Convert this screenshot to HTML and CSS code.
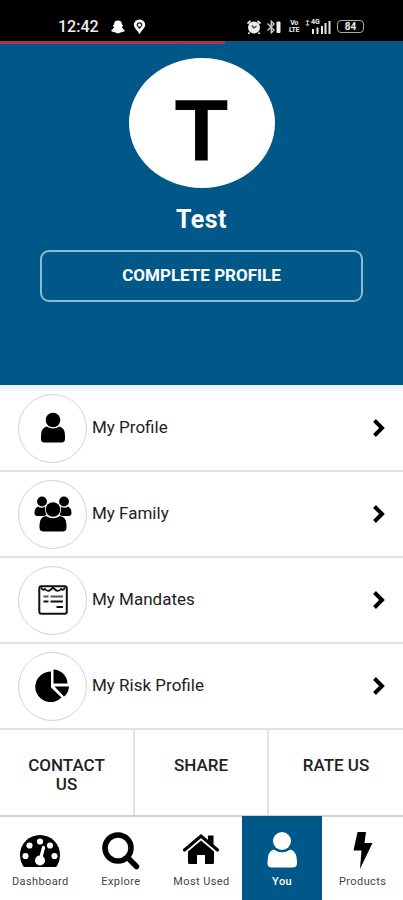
FILE: index.html
```
<!doctype html>
<html lang="en">
<head>
	<meta charset="utf-8">
	<meta name="viewport" content="width=device-width, initial-scale=1.0" />
	<title>You</title>
	<link rel="stylesheet" href="styles.css">
</head>
<body>
	<div class="statusbar">
		<span class="clock">12:42</span>
		<svg class="ghost" width="14" height="14" viewBox="0 0 14 14"><path d="M7 0.500C4.400 0.500 3 2 3.100 4.600L1.800 5.200L3 7C2.500 8.500 1.600 9.500 0.300 10L0.700 11.500L2.500 12L4.500 12.500L7 13.500L9.500 12.500L11.500 12L13.300 11.500L13.700 10C12.400 9.500 11.500 8.500 11 7L12.200 5.200L10.900 4.600C11 2 9.600 0.500 7 0.500Z" fill="#fff"/></svg>
		<svg class="pin" width="13" height="15" viewBox="0 0 13 15"><path d="M6.500 1.800A4.300 4.300 0 0 0 2.200 6C2.200 8.500 5 10 6.500 12.500C8 10 10.800 8.500 10.800 6A4.300 4.300 0 0 0 6.500 1.800Z" fill="#222" stroke="#fff" stroke-width="2.800"/><circle cx="6.500" cy="6" r="1.500" fill="#fff"/></svg>
		<div class="system">
			<svg width="14" height="14" viewBox="0 0 14 14"><circle cx="7" cy="7.600" r="6" fill="#eee"/><path d="M0.500 3.500L3.500 1M10.500 1L13.500 3.500M2.500 12.500L1.300 14M11.500 12.500L12.700 14" stroke="#eee" stroke-width="1.700"/><path d="M4.800 5.500L7 8L9.500 6" stroke="#333" stroke-width="1.200" fill="none"/></svg>
			<svg class="bluetooth" width="16" height="14" viewBox="0 0 16 14"><path d="M1.500 3.500L8 10L5.300 12.800V1.200L8 4L1.500 10.500" stroke="#ccc" stroke-width="1.400" fill="none"/><rect x="10.500" y="1.500" width="4" height="11.500" rx="1" fill="#eee"/></svg>
			<span class="volte">Vo<br>LTE</span>
			<div class="signal">
				<span class="network">4G</span>
				<svg width="26" height="14" viewBox="0 0 26 14"><path d="M2.500 0V6M0.700 2L2.500 0L4.300 2M0.700 4L2.500 6L4.300 4" stroke="#bbb" fill="none"/><path d="M8 9V14M12.500 7.500V14M17 6V14M20.500 3V14M24.500 1V14" stroke="#e5e5e5" stroke-width="2"/></svg>
			</div>
			<span class="battery">84</span>
		</div>
	</div>
	<div class="progress"></div>

	<div class="header">
		<div class="avatar">T</div>
		<h1>Test</h1>
		<a class="complete" href="#">COMPLETE PROFILE</a>
	</div>

	<ul class="menu">
		<li>
			<span class="round"><svg width="40" height="40" viewBox="0 0 40 40"><circle cx="20" cy="12" r="7.300"/><path d="M13.500 18.500Q20 22.500 26.500 18.500Q32 20 32 27.500V31Q32 34.500 28.500 34.500H11.500Q8 34.500 8 31V27.500Q8 20 13.500 18.500Z"/></svg></span>
			<span class="label">My Profile</span>
			<svg class="arrow" width="14" height="20" viewBox="0 0 14 20"><path d="M2.500 2.500L10 10L2.500 17.500"/></svg>
		</li>
		<li>
			<span class="round"><svg width="40" height="40" viewBox="0 0 40 40"><circle cx="9" cy="7.500" r="4.900"/><circle cx="31" cy="7.500" r="4.900"/><path d="M5 12.500Q9 15 12 12.500Q11.500 17.500 13.500 20.500Q12 22 10 22H4.500Q1.500 22 1.500 18.500Q1.500 14 5 12.500Z"/><path d="M35 12.500Q31 15 28 12.500Q28.500 17.500 26.500 20.500Q28 22 30 22H35.500Q38.500 22 38.500 18.500Q38.500 14 35 12.500Z"/><circle cx="20" cy="15.500" r="7.300"/><path d="M13 22Q20 26.500 27 22Q33.500 23 33.500 31V33.500Q33.500 37.500 29.500 37.500H10.500Q6.500 37.500 6.500 33.500V31Q6.500 23 13 22Z"/></svg></span>
			<span class="label">My Family</span>
			<svg class="arrow" width="14" height="20" viewBox="0 0 14 20"><path d="M2.500 2.500L10 10L2.500 17.500"/></svg>
		</li>
		<li>
			<span class="round"><svg width="40" height="40" viewBox="0 0 40 40"><rect x="6.300" y="6.300" width="27.500" height="27.500" rx="2" fill="none" stroke="#111" stroke-width="2"/><path d="M8 7.500Q10 11 12 9Q15 12.500 18 9.500L20 7.500L22 9.500Q25 12.500 28 9Q30 11 32 7.500" fill="none" stroke="#111" stroke-width="1.800"/><path d="M10.500 16.500H15.500M17.500 16.500H30" stroke="#555" stroke-width="2"/><path d="M10.500 21.500H15.500M17.500 21.500H30M23.500 27H30" stroke="#111" stroke-width="2"/></svg></span>
			<span class="label">My Mandates</span>
			<svg class="arrow" width="14" height="20" viewBox="0 0 14 20"><path d="M2.500 2.500L10 10L2.500 17.500"/></svg>
		</li>
		<li>
			<span class="round"><svg width="40" height="40" viewBox="0 0 40 40"><path d="M18 5.500V21.500L28.500 31.500A15.300 15.300 0 1 1 18 5.500Z"/><path d="M20.500 3.500A14.500 14.500 0 0 1 34.500 17.500H20.500Z"/><path d="M21.500 20.500H36Q35.500 27 31 30.500Z"/></svg></span>
			<span class="label">My Risk Profile</span>
			<svg class="arrow" width="14" height="20" viewBox="0 0 14 20"><path d="M2.500 2.500L10 10L2.500 17.500"/></svg>
		</li>
	</ul>

	<div class="actions">
		<a href="#">CONTACT US</a>
		<a href="#">SHARE</a>
		<a href="#">RATE US</a>
	</div>

	<div class="tabs">
		<a href="#">
			<svg width="42" height="42" viewBox="0 0 42 42"><path d="M4 36Q1 31 1 25A20 20 0 0 1 41 25Q41 31 38 36Q37 37 36 37H6Q5 37 4 36Z"/><g fill="#fff"><circle cx="6.500" cy="26" r="3.100"/><circle cx="10.500" cy="15.500" r="3.100"/><circle cx="21" cy="11.500" r="3.100"/><circle cx="31" cy="15.500" r="3.100"/><circle cx="35.500" cy="26" r="3.100"/><circle cx="21" cy="30.500" r="5"/></g><path d="M21.500 29L24.500 17.500" stroke="#fff" stroke-width="3.200" stroke-linecap="round"/></svg>
			<span>Dashboard</span>
		</a>
		<a href="#">
			<svg width="42" height="42" viewBox="0 0 42 42"><circle cx="18" cy="18" r="13" fill="none" stroke="#000" stroke-width="5.500"/><path d="M28 28L36.500 36.500" stroke="#000" stroke-width="5.500" stroke-linecap="round"/></svg>
			<span>Explore</span>
		</a>
		<a href="#">
			<svg width="42" height="42" viewBox="0 0 42 42"><path d="M28 5.500H33.500V18L28 13Z"/><path d="M4.500 20L21 6L37.500 20" fill="none" stroke="#000" stroke-width="3.200" stroke-linecap="round"/><path d="M21 10.500L34 21.500V32.500Q34 34 32.500 34H25V25H17V34H9.500Q8 34 8 32.500V21.500Z"/></svg>
			<span>Most Used</span>
		</a>
		<a class="active" href="#">
			<svg width="42" height="42" viewBox="0 0 42 42"><circle cx="21" cy="11" r="9"/><path d="M12.500 19.500Q21 25 29.500 19.500Q36 21.500 36 32V33.500Q36 37.500 31.500 37.500H11Q6.500 37.500 6.500 33.500V32Q6.500 21.500 12.500 19.500Z"/></svg>
			<span>You</span>
		</a>
		<a href="#">
			<svg width="42" height="42" viewBox="0 0 42 42"><path d="M15.500 2H24L22.500 13H30.500L18 39L19.500 20.500H11.500Z"/></svg>
			<span>Products</span>
		</a>
	</div>
</body>
</html>
```
FILE: styles.css
```
* {margin:0; padding:0; box-sizing:border-box;}
body {width:403px; height:900px; background:#fff; color:#222; font-family:Roboto,"Liberation Sans",sans-serif; overflow:hidden;}
a {color:inherit; text-decoration:none;}
svg {display:block; flex:none;}

.statusbar {display:flex; align-items:center; height:41px; padding:12px 39px 0 58px; background:#000; color:#eee;}
.clock {width:40px; font-size:16px; font-weight:500; line-height:16px; white-space:nowrap;}
.ghost {margin-left:13px;}
.pin {margin-left:8px;}
.system {display:flex; align-items:center; margin-left:auto;}
.bluetooth {margin-left:5px;}
.volte {width:12px; margin-left:6px; font-size:7px; font-weight:700; line-height:7px; text-align:center; letter-spacing:-0.5px;}
.signal {position:relative; margin-left:5px;}
.network {position:absolute; left:6px; top:-2px; font-size:7px; font-weight:700; line-height:8px;}
.battery {width:27px; height:13px; margin-left:6px; border:1px solid #aaa; border-radius:4px; font-size:10px; font-weight:700; line-height:12px; text-align:center;}

.progress {height:3px; background:linear-gradient(to right, #a83548 225px, #005889 225px);}

.header {display:flex; flex-direction:column; align-items:center; height:341px; padding-top:14px; background:#005889; color:#fff;}
.avatar {width:146px; height:130px; padding-top:7px; border-radius:50%; background:#fff; color:#000; font:bold 88px/130px "Liberation Sans",Arial,sans-serif; text-align:center;}
h1 {margin-top:17px; font-size:25px; font-weight:700; line-height:30px; letter-spacing:0.4px;}
.complete {width:323px; height:52px; margin-top:15px; border:2px solid #8fb8d2; border-radius:9px; font-size:17px; font-weight:700; line-height:47px; text-align:center;}

.menu {padding-top:1px; list-style:none; background:linear-gradient(#e9f1f4, #fff 9px);}
.menu li {display:flex; align-items:center; height:86px; padding:0 17px 0 18px; border-bottom:2px solid #e1e1e1;}
.round {display:flex; align-items:center; justify-content:center; width:69px; height:69px; border:1px solid #d2d2d2; border-radius:50%; background:#fff;}
.label {margin:0 0 2px 5px; font-size:17px; line-height:20px;}
.arrow {margin:0 0 1px auto;}
.arrow path {fill:none; stroke:#000; stroke-width:4;}

.actions {display:flex; height:85px;}
.actions a {width:135px; padding:26px 21px 0; border-right:2px solid #e4e4e4; font-size:17px; font-weight:500; line-height:19px; text-align:center;}
.actions a:nth-child(2) {width:134px;}
.actions a:last-child {width:134px; border:0;}

.tabs {display:flex; height:85px; background:linear-gradient(#d0d0d0 2px, #fff 2px);}
.tabs a {display:flex; flex-direction:column; align-items:center; width:20%; padding-top:15px; font-size:11px; line-height:14px;}
.tabs span {margin-top:3px; color:#444; letter-spacing:0.4px; white-space:nowrap;}
.tabs .active {margin-top:1px; padding-top:14px; background:#005889; fill:#fff;}
.tabs .active span {color:#fff; font-weight:500;}
```
